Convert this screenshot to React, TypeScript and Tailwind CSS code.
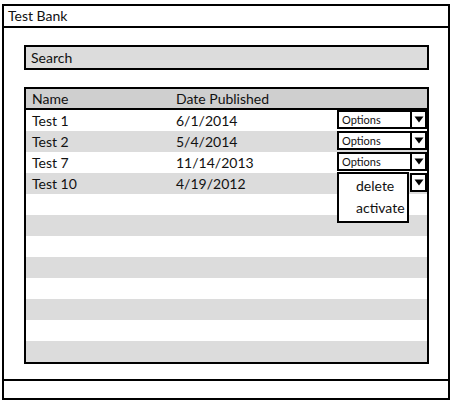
import React from "react";

const rows: { name: string; date: string; mode: "options" | "arrow" | "none" }[] = [
  { name: "Test 1", date: "6/1/2014", mode: "options" },
  { name: "Test 2", date: "5/4/2014", mode: "options" },
  { name: "Test 7", date: "11/14/2013", mode: "options" },
  { name: "Test 10", date: "4/19/2012", mode: "arrow" },
  ...Array.from({ length: 8 }, () => ({ name: "", date: "", mode: "none" as const })),
];

function Arrow() {
  return (
    <svg width="10" height="7" viewBox="0 0 10 7">
      <path d="M0.5 0.5 L9.5 0.5 L5 6.5 Z" fill="#000" />
    </svg>
  );
}

export default function App() {
  return (
    <div
      className="w-[453px] h-[405px] bg-white text-[#111] overflow-hidden"
      style={{ fontFamily: "Lato, 'Noto Sans', sans-serif" }}
    >
      <div className="ml-[2px] mt-[4px] w-[448px] h-[396px] border-2 border-black flex flex-col">
        <div className="h-[22px] border-b-2 border-black flex items-center pl-[4px] text-[14px] leading-none">
          Test Bank
        </div>
        <div className="flex-1 pl-[20px] pr-[19px] pt-[17px] flex flex-col">
          <div className="h-[25px] border-2 border-black bg-[#dcdcdc] flex items-center pl-[5px] text-[14px] leading-none">
            Search
          </div>
          <div className="relative mt-[17px] h-[277px] border-2 border-black flex flex-col">
            <div className="h-[21px] shrink-0 bg-[#cfcfcf] border-b-2 border-black flex items-center text-[14px] leading-none">
              <div className="w-[150px] pl-[6px]">Name</div>
              <div>Date Published</div>
            </div>
            {rows.map((r, i) => (
              <div
                key={i}
                className={`h-[21px] shrink-0 flex items-start text-[14px] ${i % 2 === 1 ? "bg-[#dcdcdc]" : "bg-white"}`}
              >
                <div className="w-[150px] pl-[6px] h-[21px] flex items-center leading-none">{r.name}</div>
                <div className="flex-1 h-[21px] flex items-center leading-none">{r.date}</div>
                {r.mode === "options" && (
                  <div className="w-[90px] h-[19px] border-2 border-black bg-white flex">
                    <div className="flex-1 flex items-center pl-[3px] text-[11px] leading-none">Options</div>
                    <div className="w-[15px] border-l-2 border-black flex items-center justify-center">
                      <Arrow />
                    </div>
                  </div>
                )}
                {r.mode === "arrow" && (
                  <div className="w-[17px] h-[19px] border-2 border-black bg-white flex items-center justify-center">
                    <Arrow />
                  </div>
                )}
              </div>
            ))}
            <div className="absolute left-[311px] top-[83px] w-[72px] h-[51px] border-2 border-black bg-white flex flex-col pl-[17px] pt-[1px] text-[14px] leading-none">
              <div className="h-[22px] flex items-center">delete</div>
              <div className="h-[22px] flex items-center">activate</div>
            </div>
          </div>
        </div>
        <div className="h-[19px] border-t-2 border-black" />
      </div>
    </div>
  );
}
